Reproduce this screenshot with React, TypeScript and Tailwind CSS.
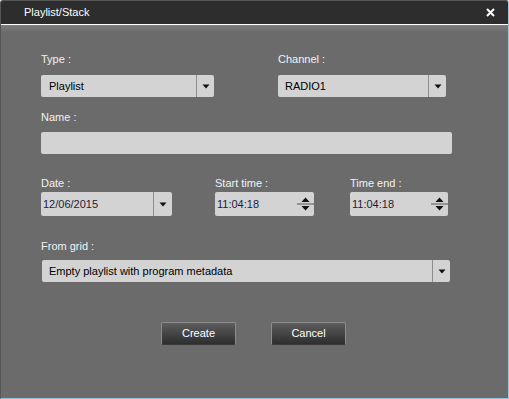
import React from 'react'

const font = { fontFamily: '"Liberation Sans", Arial, sans-serif' }

function Caret() {
  return (
    <svg width="8" height="5" viewBox="0 0 8 5" className="block">
      <path d="M0.5 0.5 H7.5 L4 4.5 Z" fill="#111" />
    </svg>
  )
}

function Select({ value, className, pad = 'pl-[7px]', dark }: { value: string; className: string; pad?: string; dark?: boolean }) {
  return (
    <div className={`flex h-[22px] items-stretch rounded-[2px] bg-[#d3d3d3] ${className}`}>
      <div className={`flex flex-1 items-center text-[11px] ${pad} ${dark ? 'text-[#1c1c3c]' : 'text-black'}`}>{value}</div>
      <div className="flex w-[18px] items-center justify-center border-l border-[#8e8e8e]">
        <Caret />
      </div>
    </div>
  )
}

// up/down arrows split by one thin rule
function Spinner() {
  return (
    <div className="flex w-[17px] items-center justify-center">
      <svg width="17" height="18" viewBox="0 0 17 18" className="block">
        <path d="M4.5 7 H12.5 L8.5 2.5 Z" fill="#111" />
        <rect x="0" y="8.5" width="17" height="1" fill="#555" />
        <path d="M4.5 11 H12.5 L8.5 15.5 Z" fill="#111" />
      </svg>
    </div>
  )
}

function TimeBox({ value, className }: { value: string; className: string }) {
  return (
    <div className={`flex h-[24px] items-stretch rounded-[2px] bg-[#d3d3d3] ${className}`}>
      <div className="flex flex-1 items-center pl-[2px] text-[11px] text-[#1c1c3c]">{value}</div>
      <Spinner />
    </div>
  )
}

function Label({ children, className = '' }: { children: React.ReactNode; className?: string }) {
  return <div className={`h-[14px] text-[11px] leading-[14px] text-[#f2f2f2] ${className}`}>{children}</div>
}

function Button({ children }: { children: React.ReactNode }) {
  return (
    <button className="flex h-[23px] w-[75px] items-center justify-center rounded-[2px] border border-[#8c8c8c] border-b-[#3a3a3a] bg-gradient-to-b from-[#5e5e5e] to-[#2e2e2e] text-[11px] text-white">
      {children}
    </button>
  )
}

export default function App() {
  return (
    <div style={font} className="flex h-[399px] w-[509px] flex-col overflow-hidden rounded-t-[3px] border border-[#555] border-b-[#8fc6e0] border-r-[#9fc7dc] bg-[#6b6b6b]">
      <div className="flex h-[24px] shrink-0 items-center justify-between border-b border-white bg-[#2d2d2d] pl-[23px] pr-[13px]">
        <span className="text-[11px] text-white">Playlist/Stack</span>
        <svg width="9" height="9" viewBox="0 0 9 9" className="block">
          <path d="M1 1 L8 8 M8 1 L1 8" stroke="white" strokeWidth="2" />
        </svg>
      </div>

      <div className="flex flex-1 flex-col bg-gradient-to-b from-[#7e7e7e] from-0% to-[#6b6b6b] to-[2%] pl-[40px] pt-[27px]">
        <div className="flex gap-[64px]">
          <div className="flex w-[173px] flex-col">
            <Label className="mb-[9px]">Type :</Label>
            <Select value="Playlist" pad="pl-[8px]" className="w-[173px]" />
          </div>
          <div className="flex w-[168px] flex-col">
            <Label className="mb-[9px]">Channel :</Label>
            <Select value="RADIO1" className="w-[168px]" />
          </div>
        </div>

        <Label className="mb-[8px] mt-[13px]">Name :</Label>
        <div className="h-[22px] w-[411px] rounded-[2px] bg-[#d3d3d3]" />

        <div className="mt-[22px] flex">
          <div className="flex w-[131px] flex-col">
            <Label className="mb-[2px]">Date :</Label>
            <div className="flex h-[24px] items-stretch rounded-[2px] bg-[#d3d3d3]">
              <div className="flex flex-1 items-center pl-[2px] text-[11px] text-[#1c1c3c]">12/06/2015</div>
              <div className="flex w-[19px] items-center justify-center border-l border-[#8e8e8e]">
                <Caret />
              </div>
            </div>
          </div>
          <div className="ml-[43px] flex w-[99px] flex-col">
            <Label className="mb-[2px]">Start time :</Label>
            <TimeBox value="11:04:18" className="w-[99px]" />
          </div>
          <div className="ml-[36px] flex w-[98px] flex-col">
            <Label className="mb-[2px]">Time end :</Label>
            <TimeBox value="11:04:18" className="w-[98px]" />
          </div>
        </div>

        <Label className="mb-[7px] mt-[23px]">From grid :</Label>
        <Select value="Empty playlist with program metadata" pad="pl-[7px]" className="ml-[1px] w-[408px]" />

        <div className="mt-[40px] flex gap-[35px] pl-[120px]">
          <Button>Create</Button>
          <Button>Cancel</Button>
        </div>
      </div>
    </div>
  )
}
